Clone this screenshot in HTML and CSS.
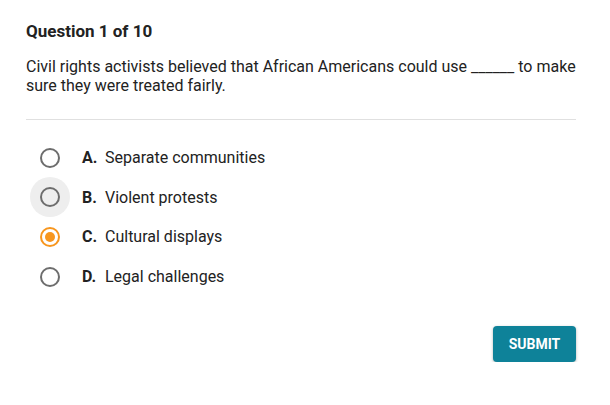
FILE: index.html
```html
<!DOCTYPE html>
<html>
<head>
<meta charset="utf-8">
<link rel="stylesheet" href="styles.css">
</head>
<body>
<div class="quiz">
  <h1 class="title">Question 1 of 10</h1>
  <p class="question">Civil rights activists believed that African Americans could use ______ to make sure they were treated fairly.</p>
  <hr class="divider">
  <ul class="options">
    <li class="option"><span class="radio"></span><span class="letter">A.</span><span class="text">Separate communities</span></li>
    <li class="option hover"><span class="radio"></span><span class="letter">B.</span><span class="text">Violent protests</span></li>
    <li class="option selected"><span class="radio"></span><span class="letter">C.</span><span class="text">Cultural displays</span></li>
    <li class="option"><span class="radio"></span><span class="letter">D.</span><span class="text">Legal challenges</span></li>
  </ul>
  <div class="actions"><button class="submit">SUBMIT</button></div>
</div>
</body>
</html>
```
FILE: styles.css
```css
html, body { margin: 0; padding: 0; background: #fff; }
body { font-family: Roboto, "Liberation Sans", sans-serif; color: #222; }
.quiz { padding: 21px 34px 0 26px; display: flex; flex-direction: column; }
.title { margin: 0; font-size: 17px; font-weight: 700; line-height: 20px; color: #222; }
.question { margin: 16px 0 0; font-size: 16px; line-height: 19px; color: #222; }
.divider { margin: 24px 0 0; border: 0; border-top: 1px solid #e0e0e0; height: 0; }
.options { list-style: none; margin: 18px 0 0; padding: 0; display: flex; flex-direction: column; }
.option { display: flex; align-items: center; height: 39.6px; font-size: 16px; color: #222; }
.radio { position: relative; width: 20px; height: 20px; box-sizing: border-box; border: 2px solid #6d6d6d; border-radius: 50%; margin-left: 14px; margin-right: 22px; flex: none; }
.option.hover { position: relative; z-index: 0; }
.option.hover .radio::before { content: ""; position: absolute; left: -12px; top: -12px; width: 40px; height: 40px; border-radius: 50%; background: #eeeeee; z-index: -1; }
.option.selected .radio { border-color: #f7961e; }
.option.selected .radio::after { content: ""; position: absolute; left: 3px; top: 3px; width: 10px; height: 10px; border-radius: 50%; background: #f7961e; }
.letter { font-weight: 700; width: 23px; }
.actions { display: flex; justify-content: flex-end; margin-top: 30px; }
.submit { background: #0e8299; color: #fff; border: 0; border-radius: 4px; font-family: Roboto, "Liberation Sans", sans-serif; font-weight: 700; font-size: 14px; width: 83px; height: 36px; box-shadow: 0 1px 3px rgba(0,0,0,0.3); padding: 0; }
```
